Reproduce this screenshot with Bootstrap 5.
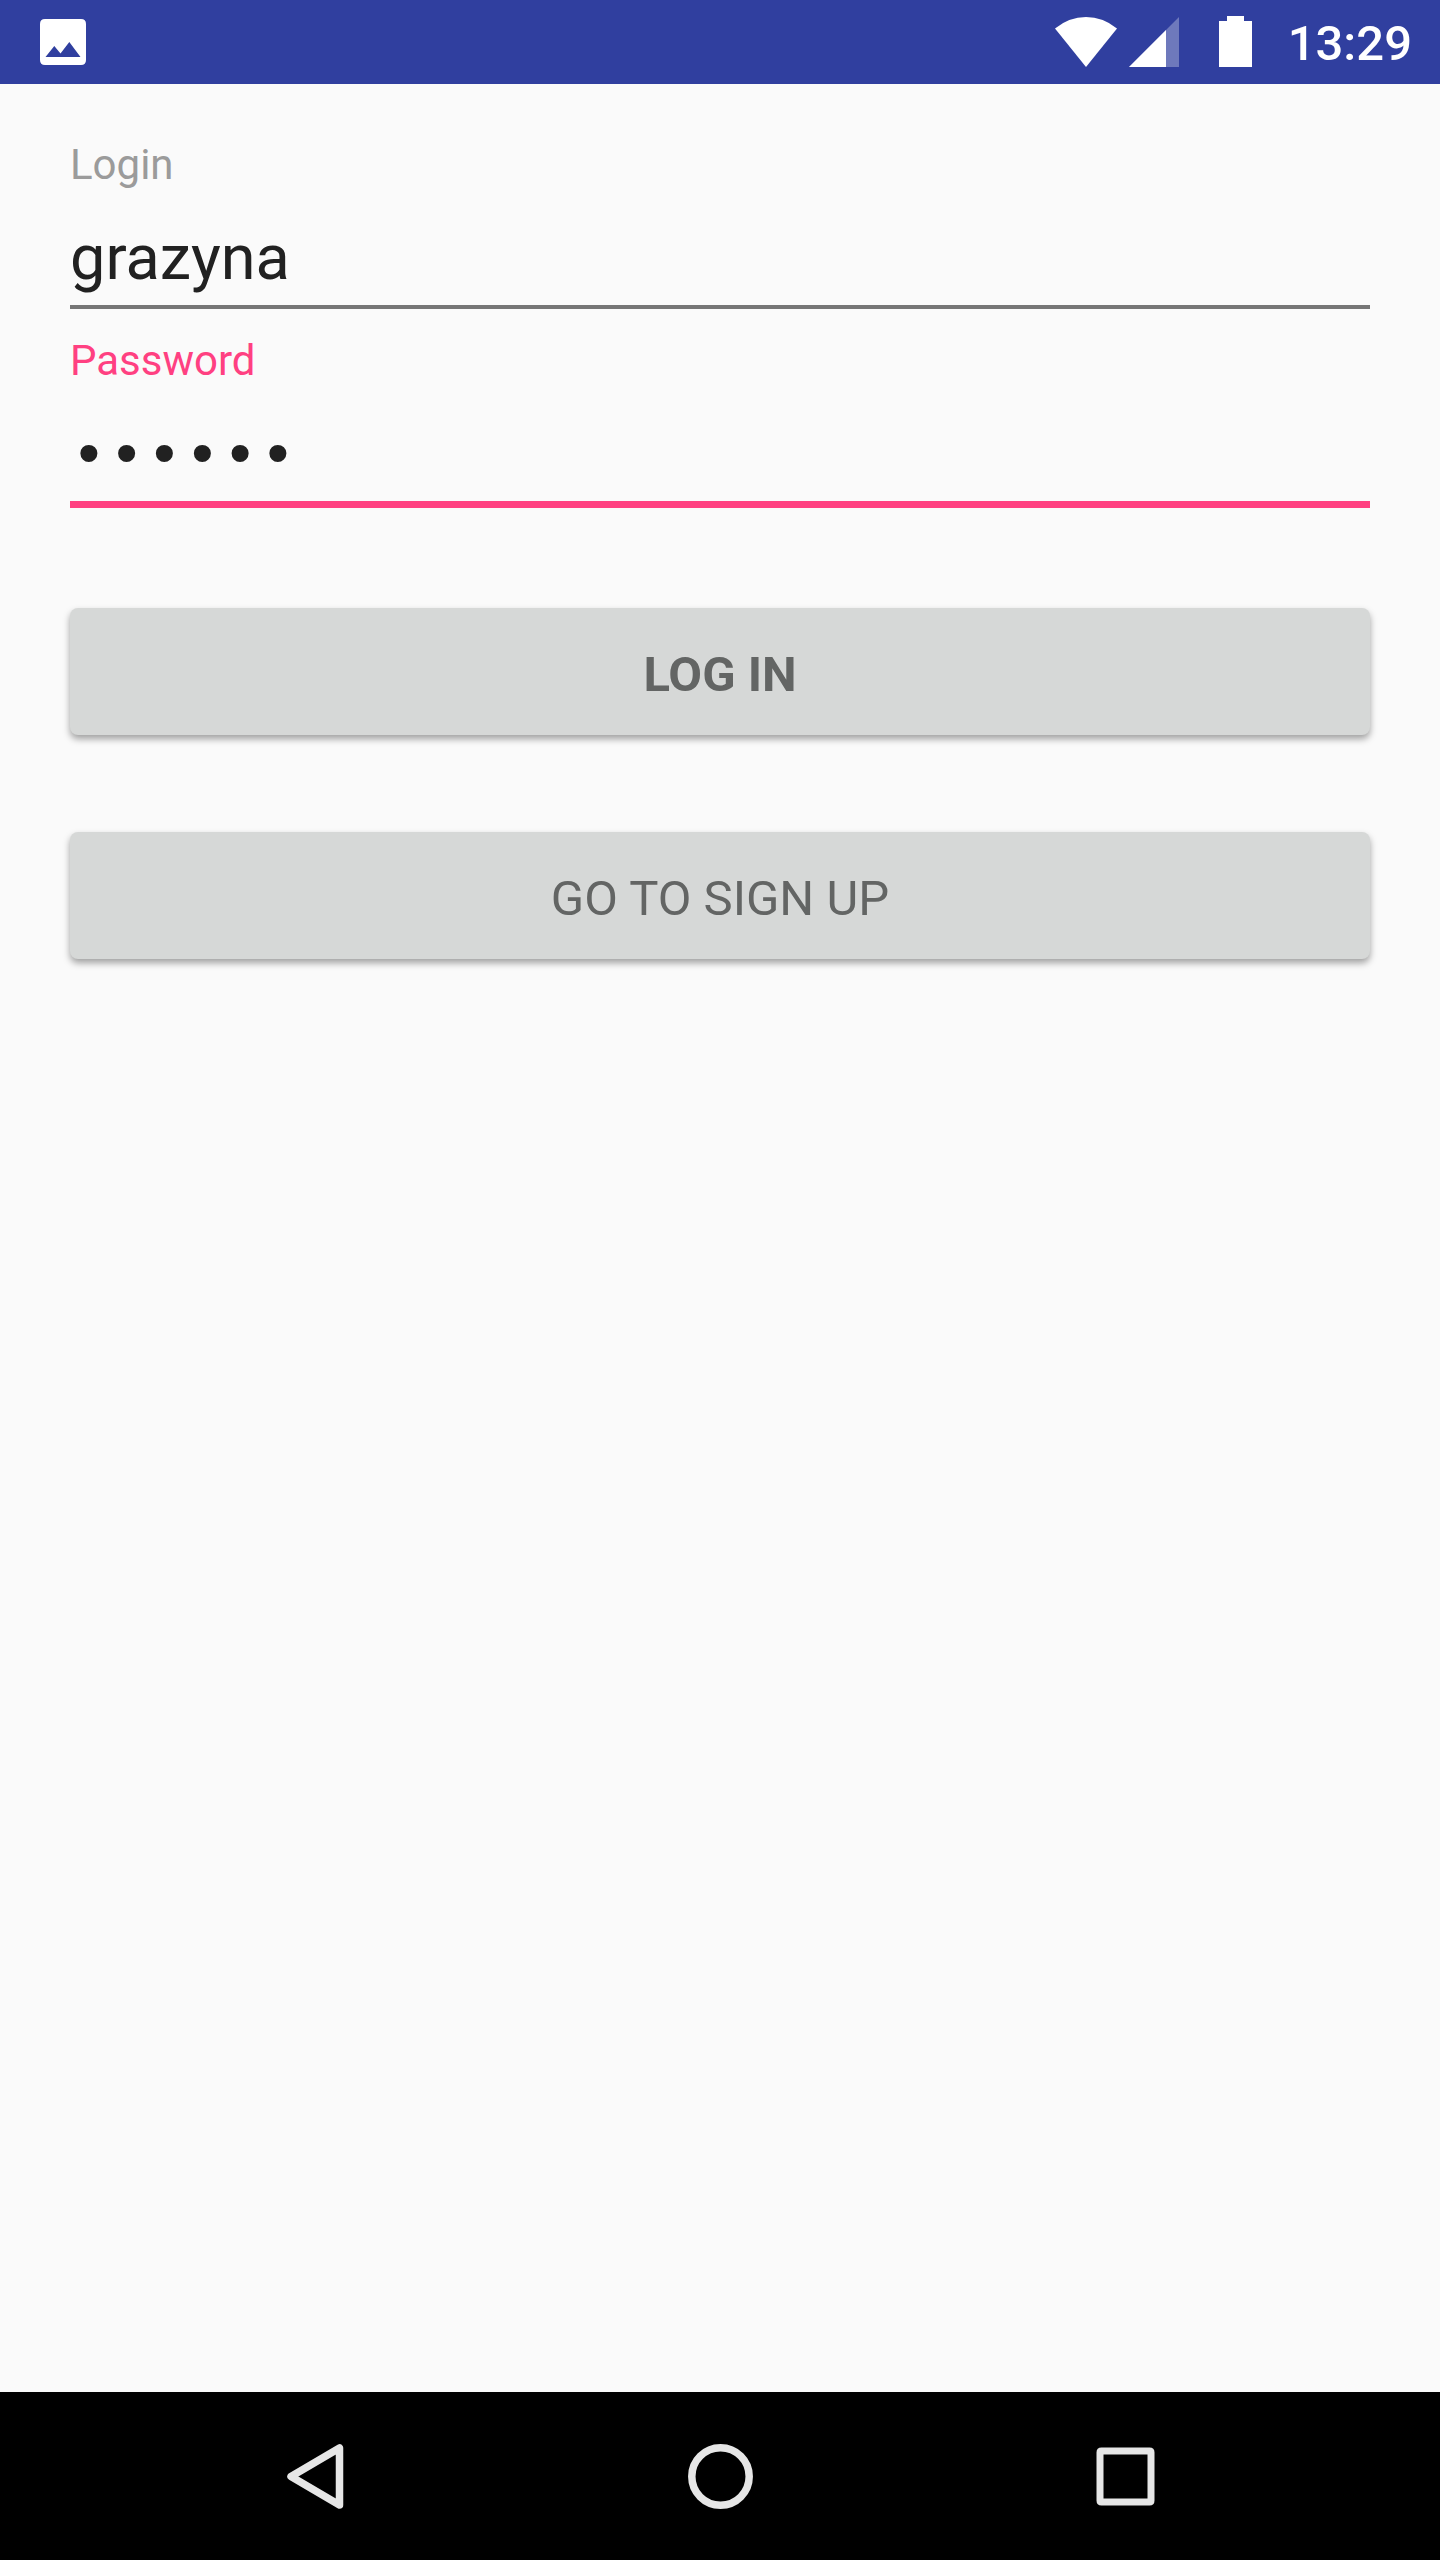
<!DOCTYPE html>
<html lang="en">
<head>
<meta charset="utf-8">
<meta name="viewport" content="width=device-width, initial-scale=1">
<title>Login</title>
<link href="https://cdn.jsdelivr.net/npm/bootstrap@5.3.0/dist/css/bootstrap.min.css" rel="stylesheet">
<style>
body { font-family: Roboto, sans-serif; background: #fafafa; color: #212121; }
.status-bar { background: #303f9f; height: 84px; padding: 0 28px 0 40px; }
.status-icons { gap: 12px; }
.battery { margin-left: 28px; }
.clock { font-size: 49px; line-height: 58px; font-weight: 500; margin-left: 24px; padding-top: 4px; }
.login-form { padding: 56px 70px; }
.field-label { font-size: 42px; line-height: 50px; color: #9b9b9b; }
.field-input { height: 119px; padding: 30px 0 11px; font-size: 63px; line-height: 74px; color: #212121; border-bottom: 4px solid #767676; }
.field-input:focus { color: #212121; background: transparent; box-shadow: none; border-color: #767676; }
.field-active .field-label { color: #ff4081; }
.field-active .field-input { height: 122px; padding: 34px 0 7px; font-family: "Liberation Mono", monospace; border-bottom: 7px solid #ff4081; }
.fields { gap: 27px; }
.actions { gap: 97px; margin-top: 100px; }
.action-btn { height: 127px; font-size: 49px; line-height: 58px; padding: 12px 24px 6px; border-radius: 8px; color: #636564; background: #d6d8d7; box-shadow: 0 4px 7px rgba(0,0,0,.36); }
.nav-keys { background: #000; height: 168px; padding: 0 112px; }
.nav-key { border: 0; background: none; flex: 1 1 0; }
</style>
</head>
<body class="d-flex flex-column min-vh-100">
<header class="status-bar d-flex align-items-center justify-content-between text-white">
  <svg width="46" height="46" viewBox="0 0 46 46" role="img" aria-label="Picture saved"><path fill="#fff" fill-rule="evenodd" d="M5 0H41Q46 0 46 5V41Q46 46 41 46H5Q0 46 0 41V5Q0 0 5 0ZM5.500 38H40.500L29.300 23L20.500 34.500L14.300 27Z"/></svg>
  <div class="status-icons d-flex align-items-center">
    <svg width="62" height="50" viewBox="0 0 62 50" role="img" aria-label="Wi-Fi"><path fill="#fff" d="M0 11.500Q14 0 31 0T62 11.500L31 50Z"/></svg>
    <svg width="50" height="50" viewBox="0 0 50 50" role="img" aria-label="Signal"><path fill="#fff" fill-opacity=".3" d="M0 50L50 0V50Z"/><path fill="#fff" d="M0 50L37 13V50Z"/></svg>
    <svg class="battery" width="33" height="52" viewBox="0 0 33 52" role="img" aria-label="Battery"><path fill="#fff" d="M8 0H25V5H33V51H0V5H8Z"/></svg>
    <span class="clock">13:29</span>
  </div>
</header>
<main class="flex-grow-1">
  <form class="login-form" onsubmit="return false">
    <div class="fields d-flex flex-column">
      <div>
        <label class="field-label d-block" for="login">Login</label>
        <input class="field-input form-control border-top-0 border-start-0 border-end-0 rounded-0 bg-transparent" id="login" type="text" value="grazyna" autocomplete="off" spellcheck="false">
      </div>
      <div class="field-active">
        <label class="field-label d-block" for="password">Password</label>
        <input class="field-input form-control border-top-0 border-start-0 border-end-0 rounded-0 bg-transparent" id="password" type="password" value="secret" autocomplete="off">
      </div>
    </div>
    <div class="actions d-flex flex-column">
      <button class="action-btn btn border-0 w-100 fw-bold" type="submit">LOG IN</button>
      <button class="action-btn btn border-0 w-100" type="button">GO TO SIGN UP</button>
    </div>
  </form>
</main>
<nav class="nav-keys d-flex" aria-label="System">
  <button class="nav-key d-flex align-items-center justify-content-center" type="button" aria-label="Back"><svg width="66" height="66" viewBox="0 0 66 66"><path d="M57.500 5V62L9 33.500Z" fill="none" stroke="#e6e6e6" stroke-width="7.500" stroke-linejoin="round"/></svg></button>
  <button class="nav-key d-flex align-items-center justify-content-center" type="button" aria-label="Home"><svg width="66" height="66" viewBox="0 0 66 66"><circle cx="33.500" cy="33.500" r="28.700" fill="none" stroke="#e6e6e6" stroke-width="7.500"/></svg></button>
  <button class="nav-key d-flex align-items-center justify-content-center" type="button" aria-label="Recent apps"><svg width="66" height="66" viewBox="0 0 66 66"><path transform="translate(.5 .5)" fill="#e6e6e6" fill-rule="evenodd" d="M9 4H57Q62 4 62 9V57Q62 62 57 62H9Q4 62 4 57V9Q4 4 9 4ZM11 11V55H55V11Z"/></svg></button>
</nav>
<script src="https://cdn.jsdelivr.net/npm/bootstrap@5.3.0/dist/js/bootstrap.bundle.min.js"></script>
</body>
</html>
